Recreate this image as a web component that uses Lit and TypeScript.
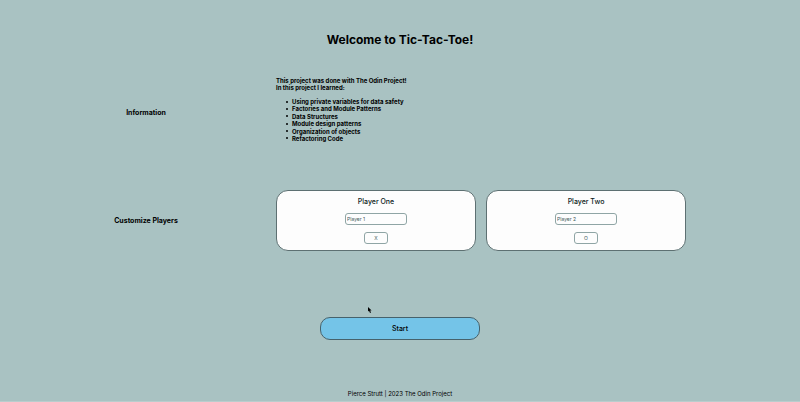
import { LitElement, html, css } from "lit";
import { customElement, property } from "lit/decorators.js";

const topics = [
  "Using private variables for data safety",
  "Factories and Module Patterns",
  "Data Structures",
  "Module design patterns",
  "Organization of objects",
  "Refactoring Code",
];

@customElement("player-card")
export class PlayerCard extends LitElement {
  @property() heading = "";
  @property() hint = "";
  @property() mark = "";

  static styles = css`
    :host {
      display: flex;
      flex-direction: column;
      align-items: center;
      box-sizing: border-box;
      padding: 5px 8px 6px;
      border: 1px solid #5d7072;
      border-radius: 12px;
      background: #fdfdfd;
    }
    .name {
      font-size: 7px;
      line-height: 12px;
      font-weight: 500;
      color: #0c1a1a;
      margin-bottom: 5px;
    }
    .field {
      box-sizing: border-box;
      font: inherit;
      font-size: 5px;
      line-height: 9px;
      border: 1px solid #8fa5a5;
      border-radius: 3px;
      background: #fdfdfd;
      color: #3f5a5b;
      margin: 0;
    }
    .field::placeholder {
      color: #3f5a5b;
      opacity: 1;
    }
    .text {
      width: 62px;
      height: 12px;
      padding: 0 1px;
      margin-bottom: 7px;
    }
    .mark {
      width: 24px;
      height: 12px;
      padding: 0;
      text-align: center;
    }
  `;

  render() {
    return html`
      <label class="name" for="name">${this.heading}</label>
      <input class="field text" id="name" type="text" placeholder=${this.hint} />
      <input
        class="field mark"
        type="text"
        maxlength="1"
        aria-label="${this.heading} marker"
        placeholder=${this.mark}
      />
    `;
  }
}

@customElement("app-root")
export class AppRoot extends LitElement {
  static styles = css`
    :host {
      display: flex;
      flex-direction: column;
      align-items: center;
      box-sizing: border-box;
      min-height: 100vh;
      padding: 32px 0 1px;
      border-bottom: 1px solid #b9cdcd;
      background: #a9c2c2;
      color: #000;
      font-family: Inter, "Open Sans", sans-serif;
      position: relative;
    }
    .title {
      margin: 0 0 25px;
      font-size: 12px;
      line-height: 16px;
      font-weight: 700;
    }
    .setup {
      align-self: stretch;
      display: grid;
      grid-template-columns: 260fr 410fr;
      row-gap: 37px;
      margin: 0 14.25% 0 2%;
      align-items: center;
    }
    .label {
      margin: 0;
      font-size: 7px;
      line-height: 12px;
      font-weight: 700;
      text-align: center;
    }
    .info {
      padding: 4px 0 11px;
      font-size: 6px;
      line-height: 7px;
      font-weight: 700;
    }
    .intro {
      margin: 0 0 7px;
    }
    .topics {
      display: grid;
      margin: 0;
      padding: 0 0 0 10px;
      min-height: 44px;
      align-content: space-between;
      list-style: none;
    }
    .topic {
      display: flex;
      align-items: center;
      gap: 4px;
    }
    .topic::before {
      content: "";
      width: 2px;
      height: 2px;
      border-radius: 1px;
      background: #000;
    }
    .players {
      display: grid;
      grid-template-columns: 1fr 1fr;
      gap: 10px;
    }
    .start {
      width: 20%;
      height: 23px;
      margin: 66px 0 auto;
      padding: 0;
      border: 1px solid #46626c;
      border-radius: 10px;
      background: #74c4e8;
      color: #000;
      font: inherit;
      font-size: 7px;
      font-weight: 500;
    }
    .footer {
      font-size: 6px;
      line-height: 12px;
    }
    .pointer {
      position: absolute;
      left: 46%;
      top: 307px;
      width: 4px;
      height: 6px;
    }
  `;

  render() {
    return html`
      <h1 class="title">Welcome to Tic-Tac-Toe!</h1>
      <main class="setup">
        <h2 class="label">Information</h2>
        <section class="info">
          <p class="intro">
            This project was done with The Odin Project!<br />In this project I learned:
          </p>
          <ul class="topics">
            ${topics.map((topic) => html`<li class="topic">${topic}</li>`)}
          </ul>
        </section>
        <h2 class="label">Customize Players</h2>
        <section class="players">
          <player-card heading="Player One" hint="Player 1" mark="X"></player-card>
          <player-card heading="Player Two" hint="Player 2" mark="O"></player-card>
        </section>
      </main>
      <button class="start" type="button">Start</button>
      <footer class="footer">Pierce Strutt | 2023 The Odin Project</footer>
      <svg class="pointer" viewBox="0 0 4 6" aria-hidden="true">
        <path d="M0 0V4.6L1 3.8L2 6L3 5.5L2.1 3.5H3.6Z" fill="#000" />
      </svg>
    `;
  }
}
